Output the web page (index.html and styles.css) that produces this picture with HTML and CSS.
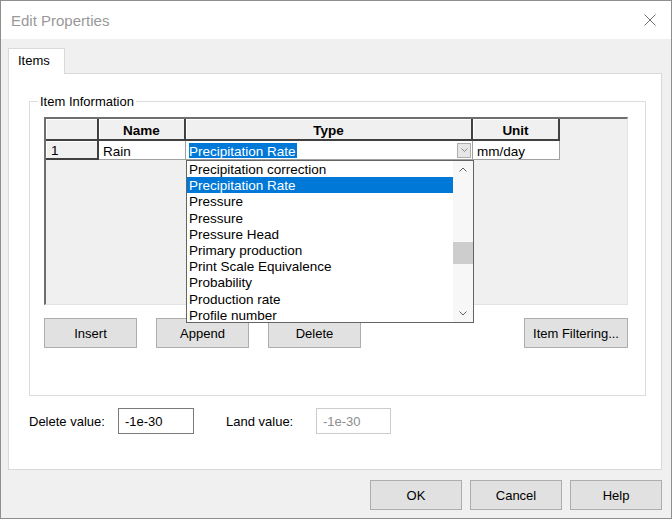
FILE: index.html
```html
<!DOCTYPE html>
<html lang="en">
<head>
  <meta charset="UTF-8" />
  <meta name="viewport" content="width=device-width, initial-scale=1.0"/>
  <title>Edit Properties</title>
  <link rel="stylesheet" href="styles.css">
</head>
<body>
  <div class="dialog">
    <div class="titleBar">
      <span class="titleText">Edit Properties</span>
      <div class="closeButton">
        <svg width="12" height="12" viewBox="0 0 12 12">
          <path d="M0.5 0.5 L11.5 11.5 M11.5 0.5 L0.5 11.5" stroke="#707070" stroke-width="1" fill="none"/>
        </svg>
      </div>
    </div>

    <div class="dialogBody">
      <div class="tabStrip">
        <div class="tab active">Items</div>
      </div>

      <div class="tabPanel">
        <div class="itemGroup">
          <span class="groupLabel">Item Information</span>

          <div class="itemGrid">
            <div class="gridTable">
              <div class="headCell"></div>
              <div class="headCell">Name</div>
              <div class="headCell">Type</div>
              <div class="headCell">Unit</div>

              <div class="headCell rowHead">1</div>
              <div class="cell">Rain</div>
              <div class="cell typeCell">
                <span class="selText">Precipitation Rate</span>
                <span class="comboButton">
                  <svg width="7" height="4" viewBox="0 0 7 4">
                    <polyline points="0.5,0.5 3.5,3.5 6.5,0.5" stroke="#8a8a8a" fill="none"/>
                  </svg>
                </span>

                <!-- open combo list -->
                <div class="dropList">
                  <ul class="dropItems">
                    <li>Precipitation correction</li>
                    <li class="selected">Precipitation Rate</li>
                    <li>Pressure</li>
                    <li>Pressure</li>
                    <li>Pressure Head</li>
                    <li>Primary production</li>
                    <li>Print Scale Equivalence</li>
                    <li>Probability</li>
                    <li>Production rate</li>
                    <li>Profile number</li>
                  </ul>
                  <div class="scrollBar">
                    <div class="scrollArrow">
                      <svg width="8" height="5" viewBox="0 0 8 5">
                        <polyline points="0.5,4.5 4,1 7.5,4.5" stroke="#606060" fill="none"/>
                      </svg>
                    </div>
                    <div class="scrollTrack">
                      <div class="scrollThumb"></div>
                    </div>
                    <div class="scrollArrow">
                      <svg width="8" height="5" viewBox="0 0 8 5">
                        <polyline points="0.5,0.5 4,4 7.5,0.5" stroke="#606060" fill="none"/>
                      </svg>
                    </div>
                  </div>
                </div>
              </div>
              <div class="cell">mm/day</div>
            </div>
          </div>

          <div class="gridButtons">
            <button class="button">Insert</button>
            <button class="button">Append</button>
            <button class="button">Delete</button>
            <button class="button filterButton">Item Filtering...</button>
          </div>
        </div>

        <div class="valueRow">
          <label class="valueLabel">Delete value:</label>
          <input class="valueInput" type="text" value="-1e-30">
          <label class="valueLabel landLabel">Land value:</label>
          <input class="valueInput" type="text" value="-1e-30" disabled>
        </div>
      </div>

      <div class="footer">
        <button class="button footButton">OK</button>
        <button class="button footButton">Cancel</button>
        <button class="button footButton">Help</button>
      </div>
    </div>
  </div>
</body>
</html>
```

FILE: styles.css
```css
body {
  margin: 0;
  font-family: "Liberation Sans", Arial, sans-serif;
  font-size: 13px;
  color: black;
  background-color: #f0f0f0;
}

.dialog {
  width: 672px;
  height: 519px;
  box-sizing: border-box;
  border: 1px solid #8e8e8e;
  background-color: #f0f0f0;
  display: flex;
  flex-direction: column;
}

/* title bar */
.titleBar {
  height: 38px;
  flex-shrink: 0;
  background-color: white;
  display: flex;
  align-items: center;
  justify-content: space-between;
  padding-left: 10px;
}
.titleText {
  font-size: 15px;
  color: #999;
}
.closeButton {
  width: 42px;
  height: 38px;
  display: flex;
  align-items: center;
  justify-content: center;
}

.dialogBody {
  flex: 1;
  padding: 9px 9px 0 7px;
  display: flex;
  flex-direction: column;
}

/* tabs */
.tabStrip {
  display: flex;
}
.tab {
  width: 57px;
  height: 26px;
  box-sizing: border-box;
  border: 1px solid #d9d9d9;
  border-bottom: none;
  background-color: white;
  margin-bottom: -1px;
  padding-left: 9px;
  line-height: 24px;
  position: relative;
  z-index: 1;
}
.tabPanel {
  height: 397px;
  box-sizing: border-box;
  border: 1px solid #d9d9d9;
  background-color: white;
  padding: 27px 15px 0 20px;
}

/* group box */
.itemGroup {
  position: relative;
  height: 295px;
  box-sizing: border-box;
  border: 1px solid #dcdcdc;
  padding: 15px 16px 0 14px;
}
.groupLabel {
  position: absolute;
  left: 8px;
  top: -8px;
  padding: 0 2px;
  line-height: 16px;
  background-color: white;
}

/* grid */
.itemGrid {
  width: 584px;
  height: 188px;
  box-sizing: border-box;
  border-style: solid;
  border-width: 2px 1px 1px 2px;
  border-color: #6e6e6e #e3e3e3 #e3e3e3 #6e6e6e;
  background-color: #f0f0f0;
}
.gridTable {
  display: grid;
  grid-template-columns: 53px 87px 287px 87px;
  grid-template-rows: 22px 19px;
  font-size: 13.5px;
}
.headCell {
  box-sizing: border-box;
  background-color: #f0f0f0;
  border-right: 2px solid #404040;
  border-bottom: 2px solid #404040;
  box-shadow: inset 1px 1px 0 white;
  font-weight: bold;
  padding-top: 2px;
  display: flex;
  align-items: center;
  justify-content: center;
}
.headCell.rowHead {
  font-weight: normal;
  justify-content: flex-start;
  padding-left: 5px;
}
.cell {
  box-sizing: border-box;
  background-color: white;
  border-right: 1px solid #a0a0a0;
  border-bottom: 1px solid #a0a0a0;
  padding-left: 4px;
  padding-top: 2px;
  display: flex;
  align-items: center;
  white-space: nowrap;
}
.typeCell {
  position: relative;
  padding-left: 3px;
  padding-top: 0;
}
.selText {
  background-color: #0078d7;
  color: white;
  height: 15px;
  line-height: 17px;
  padding-right: 1px;
}
.comboButton {
  margin-left: auto;
  margin-right: 1px;
  width: 14px;
  height: 15px;
  box-sizing: border-box;
  border: 1px solid #adadad;
  background-color: #e6e6e6;
  display: flex;
  align-items: center;
  justify-content: center;
}

/* open drop down */
.dropList {
  position: absolute;
  top: 19px;
  left: 0;
  width: 288px;
  height: 163px;
  box-sizing: border-box;
  border: 1px solid #646464;
  background-color: white;
  display: flex;
  overflow: hidden;
  z-index: 5;
}
.dropItems {
  flex: 1;
  list-style: none;
  margin: 0;
  padding: 0;
}
.dropItems li {
  height: 16.2px;
  box-sizing: border-box;
  padding: 2px 0 0 2px;
  line-height: 14.2px;
}
.dropItems li.selected {
  background-color: #0078d7;
  color: white;
}
.scrollBar {
  width: 20px;
  display: flex;
  flex-direction: column;
  background-color: #f7f7f7;
}
.scrollArrow {
  height: 17px;
  display: flex;
  align-items: center;
  justify-content: center;
}
.scrollTrack {
  flex: 1;
}
.scrollThumb {
  margin-top: 64px;
  height: 22px;
  background-color: #cdcdcd;
}

/* buttons */
.button {
  height: 30px;
  width: 93px;
  box-sizing: border-box;
  padding: 0;
  font: inherit;
  color: black;
  background-color: #e1e1e1;
  border: 1px solid #adadad;
}
.gridButtons {
  width: 584px;
  display: flex;
  gap: 19px;
  margin-top: 13px;
}
.filterButton {
  margin-left: auto;
  width: 104px;
}

/* values */
.valueRow {
  display: flex;
  align-items: center;
  margin-top: 12px;
}
.valueLabel {
  width: 89px;
}
.landLabel {
  margin-left: 32px;
  width: 90px;
}
.valueInput {
  width: 76px;
  height: 26px;
  box-sizing: border-box;
  border: 1px solid #7a7a7a;
  padding: 0 0 0 6px;
  font: inherit;
  color: black;
  background-color: white;
}
.valueInput:disabled {
  width: 75px;
  border-color: #cccccc;
  color: #8c8c8c;
}

.footer {
  display: flex;
  justify-content: flex-end;
  gap: 8px;
  margin-top: 10px;
}
.footButton {
  width: 92px;
}
```
